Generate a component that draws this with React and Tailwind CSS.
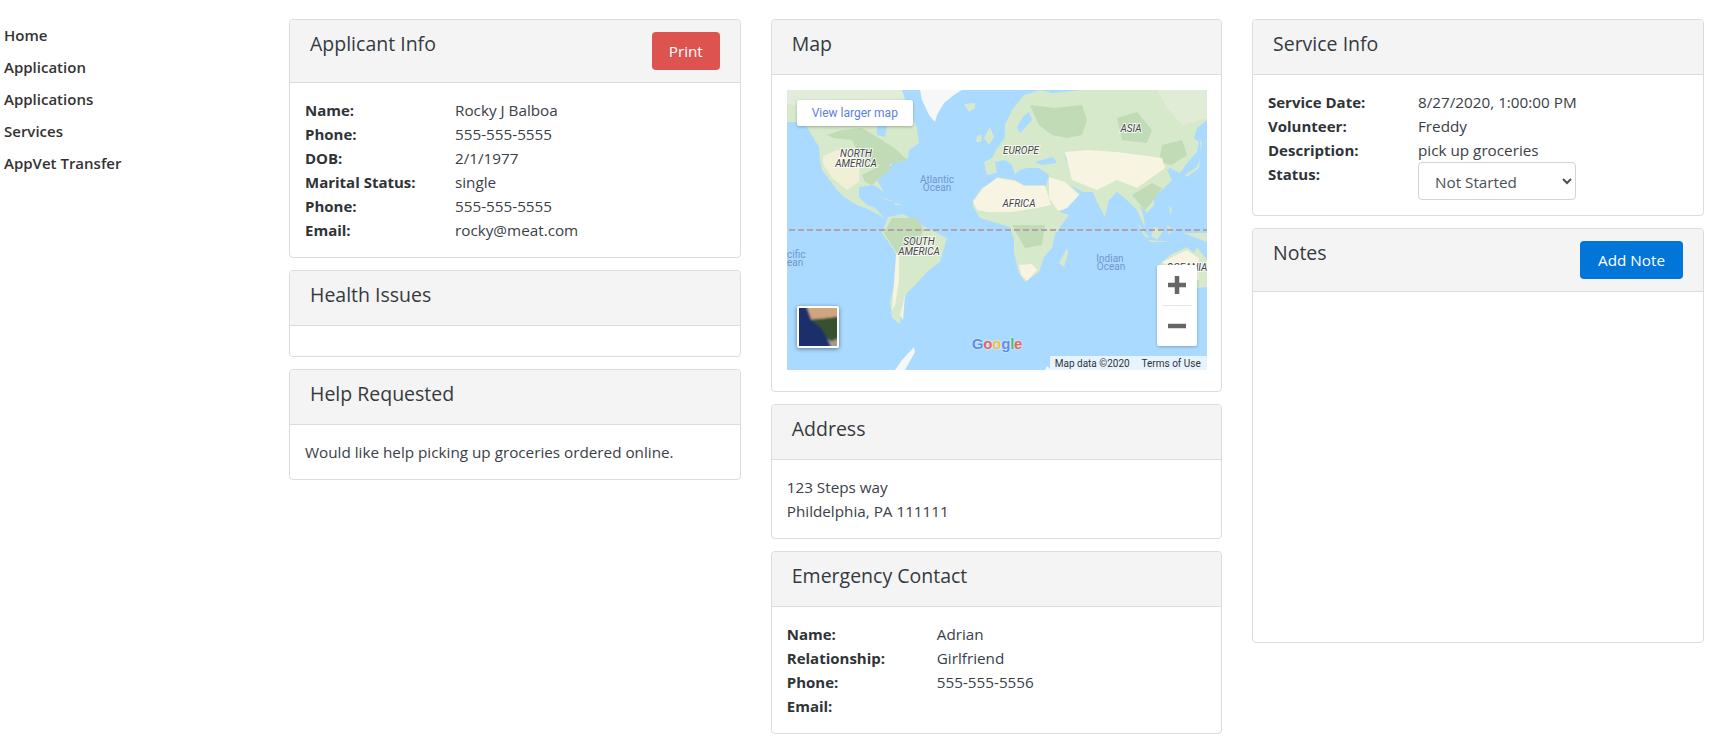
import React from 'react';

const font = { fontFamily: '"Open Sans", "Noto Sans", sans-serif' };

const navItems = ['Home', 'Application', 'Applications', 'Services', 'AppVet Transfer'];

const Card = ({ title, action, bodyClass = 'p-[15px]', children }) => (
  <div className="mb-[12px] rounded-[4px] border border-[#dcdcdc] bg-white">
    <div className="flex items-start justify-between rounded-t-[4px] border-b border-[#dcdcdc] bg-[#f4f4f4] px-5 py-3">
      <h4 className="mb-[6px] text-[19.5px] leading-6 text-[#343a40]">{title}</h4>
      {action}
    </div>
    <div className={bodyClass}>{children}</div>
  </div>
);

const Row = ({ label, children }) => (
  <div className="flex text-[15.25px] leading-6 text-[#3a4047]">
    <div className="w-[150px] shrink-0 text-[15px] font-bold text-[#2f3337]">{label}</div>
    <div>{children}</div>
  </div>
);

const MapLabel = ({ x, y, children }) => (
  <text
    x={x}
    y={y}
    textAnchor="middle"
    fontFamily="Roboto, sans-serif"
    fontSize="10"
    fontStyle="italic"
    fill="#444"
    stroke="#fff"
    strokeWidth="2"
    strokeOpacity="0.8"
    paintOrder="stroke"
  >
    {children}
  </text>
);

const OceanLabel = ({ x, y, anchor = 'middle', children }) => (
  <text x={x} y={y} textAnchor={anchor} fontFamily="Roboto, sans-serif" fontSize="10" fill="#6f96d1">
    {children}
  </text>
);

const WorldMap = () => (
  <div className="relative h-[280px] w-[420px] overflow-hidden bg-[#aadaff]">
    <svg width="420" height="280" viewBox="0 0 420 280" className="block">
      <g className="blur-[0.5px]">
        {/* land base */}
        <g fill="#d6e9ca">
          {/* north america */}
          <path d="M0 0L115 0L122 20L130 38L132 53L122 60L121 68L107 70L102 80L90 90L97 102L87 95L72 97L72 107L80 115L88 118L97 128L83 120L70 115L57 107L50 100L45 93L35 80L33 70L32 57L20 37L10 32L0 32Z" />
          {/* south america */}
          <path d="M95 143L101 127L116 124L138 137L160 148L153 172L140 182L128 195L120 203L115 215L113 234L105 228L103 213L108 190L110 167L107 160Z" />
          {/* eurasia */}
          <path d="M197 72L205 68L210 58L218 48L218 35L225 20L237 5L253 0L420 0L420 30L410 38L407 48L412 52L410 62L400 73L393 83L383 78L380 80L385 90L375 100L367 107L367 115L360 123L353 115L357 128L358 138L350 120L340 110L330 102L322 110L318 127L310 112L306 102L296 102L280 93L278 90L293 104L283 108L277 120L268 123L260 110L258 100L262 85L252 78L240 78L233 80L228 84L225 75L218 70L208 72L210 83L200 85Z" />
          {/* africa */}
          <path d="M186 110L195 98L206 92L210 87L228 90L237 95L258 95L265 115L273 122L282 125L273 137L268 145L265 158L257 167L252 182L238 192L232 183L227 163L227 150L223 137L206 132L193 128L186 117Z" />
          {/* australia */}
          <path d="M372 175L383 165L400 157L407 163L410 157L420 170L420 197L410 198L390 190Z" />
          {/* islands */}
          <path d="M197 48L203 37L207 47L202 55ZM190 46L195 45L194 52L189 52Z" />
          <path d="M177 14L188 13L188 18L182 22Z" />
          <path d="M272 173L280 158L281 163L277 177Z" />
          <path d="M350 133L363 148L358 147ZM367 137L377 140L370 150L364 146ZM396 143L420 152L420 143ZM362 150L385 152L362 152ZM382 115L385 120L383 125ZM380 135L386 140L382 145Z" />
          <path d="M410 77L413 68L412 78L400 87L398 85ZM415 50L414 62L413 52Z" />
          <path d="M93 107L103 110L111 113L100 110ZM108 113L116 115L108 115Z" />
        </g>
        {/* water cut into land */}
        <g fill="#aadaff">
          <path d="M90 36L100 36L98 47L90 45Z" />
          <path d="M236 27L242 22L245 30L233 43L230 37Z" />
          <path d="M248 72L266 67L270 73L255 75Z" />
          <path d="M278 67L285 67L290 78L283 80Z" />
          <path d="M265 3L295 0L253 0Z" />
        </g>
        {/* forest */}
        <g fill="#c0dbb6">
          <path d="M40 45L55 40L75 38L95 50L110 60L120 70L100 75L85 75L75 70L65 50L47 48Z" />
          <path d="M75 85L100 72L105 78L85 95L78 92Z" />
          <path d="M97 143L105 128L130 128L137 140L132 150L110 163Z" />
          <path d="M225 135L258 135L255 155L238 158Z" />
          <path d="M243 15L268 18L295 15L300 30L295 45L280 48L265 45L252 35Z" />
          <path d="M330 28L350 22L365 40L360 53L335 50Z" />
          <path d="M375 55L395 50L400 65L385 75L372 72Z" />
          <path d="M345 105L365 93L375 98L365 112L358 120Z" />
        </g>
        {/* pale north-east */}
        <path d="M370 0L420 0L420 28L395 35L380 18Z" fill="#e0ecd6" />
        <path d="M0 0L115 0L118 14L85 20L50 22L0 14Z" fill="#e2ecdb" />
        {/* dry land */}
        <g fill="#f8f4e2">
          <path d="M186 112L196 98L210 88L228 91L237 96L258 96L264 115L250 118L225 122L200 122L190 120Z" />
          <path d="M262 87L278 92L292 105L280 118L271 121L262 108Z" />
          <path d="M278 62L300 60L330 62L375 68L378 78L350 98L330 90L310 100L285 90Z" />
          <path d="M232 175L245 174L250 180L240 191L234 185Z" />
          <path d="M375 172L400 160L412 168L412 190L392 186Z" />
          <path d="M109 165L112 165L112 190L108 215L105 220Z" />
          <path d="M113 225L118 205L116 230Z" />
        </g>
        <path d="M36 66L50 60L65 62L73 72L72 92L60 100L45 88L36 74Z" fill="#f1efd6" />
        {/* greenland, antarctic scraps */}
        <path d="M133 0L175 0L167 5L157 13L150 25L148 32L142 25L135 10Z" fill="#f6f8f8" />
        <path d="M108 280L115 270L127 257L128 262L118 280ZM258 280L260 276L264 280Z" fill="#f6f8f8" />
      </g>

      {/* equator */}
      <line x1="2" y1="140" x2="420" y2="140" stroke="#b3a2ab" strokeWidth="2" strokeDasharray="6 3" />

      <MapLabel x={69} y={67}>NORTH</MapLabel>
      <MapLabel x={69} y={77}>AMERICA</MapLabel>
      <MapLabel x={234} y={64}>EUROPE</MapLabel>
      <MapLabel x={344} y={42}>ASIA</MapLabel>
      <MapLabel x={232} y={117}>AFRICA</MapLabel>
      <MapLabel x={132} y={155}>SOUTH</MapLabel>
      <MapLabel x={132} y={165}>AMERICA</MapLabel>
      <MapLabel x={400} y={181}>OCEANIA</MapLabel>
      <OceanLabel x={150} y={93}>Atlantic</OceanLabel>
      <OceanLabel x={150} y={101}>Ocean</OceanLabel>
      <OceanLabel x={323} y={172}>Indian</OceanLabel>
      <OceanLabel x={324} y={180}>Ocean</OceanLabel>
      <OceanLabel x={0} y={168} anchor="start">cific</OceanLabel>
      <OceanLabel x={0} y={176} anchor="start">ean</OceanLabel>
    </svg>

    <div className="absolute left-[10px] top-[10px] flex h-[26px] w-[116px] items-center justify-center rounded-[2px] bg-white font-['Roboto'] text-[12px] text-[#5b81e0] shadow-[0_1px_3px_rgba(0,0,0,0.25)]">
      View larger map
    </div>

    <div className="absolute left-[10px] top-[216px] h-[42px] w-[42px] rounded-[2px] border-2 border-white shadow-[0_1px_4px_rgba(0,0,0,0.45)]">
      <svg width="38" height="38" viewBox="0 0 38 38" className="block">
        <rect width="38" height="38" fill="#1d2f6b" />
        <g className="blur-[0.8px]">
          <path d="M7 -2L40 -2L40 9L24 11L12 12Z" fill="#cfa57f" />
          <path d="M12 12L24 11L40 9L40 30L32 33L28 30L22 20Z" fill="#37512f" />
          <path d="M28 30L32 33L40 30L40 40L32 40Z" fill="#a89a88" />
        </g>
      </svg>
    </div>

    <div className="absolute left-[370px] top-[175px] flex h-[81px] w-[40px] flex-col items-center rounded-[2px] bg-white shadow-[0_1px_3px_rgba(0,0,0,0.25)]">
      <svg width="40" height="40" viewBox="0 0 40 40" className="block">
        <path d="M11 20H29M20 11V29" stroke="#666" strokeWidth="4.5" />
      </svg>
      <div className="h-px w-[30px] bg-[#e6e6e6]" />
      <svg width="40" height="40" viewBox="0 0 40 40" className="block">
        <path d="M11 20H29" stroke="#666" strokeWidth="4.5" />
      </svg>
    </div>

    <div className="absolute left-[185px] top-[244px] font-['Liberation_Sans'] text-[15px] font-bold leading-5 tracking-[-0.2px] [text-shadow:0_0_2px_#fff]">
      <span className="text-[#5a8def]">G</span>
      <span className="text-[#e8635a]">o</span>
      <span className="text-[#f3bf3e]">o</span>
      <span className="text-[#5a8def]">g</span>
      <span className="text-[#5cb574]">l</span>
      <span className="text-[#e8635a]">e</span>
    </div>

    <div className="absolute bottom-0 right-0 flex h-[14px] w-[157px] items-center justify-between bg-white/70 pl-[5px] pr-[6px] font-['Roboto'] text-[10px] text-[#333]">
      <span>Map data ©2020</span>
      <span>Terms of Use</span>
    </div>
  </div>
);

export default function App() {
  return (
    <div className="flex min-h-[754px] bg-white" style={font}>
      <nav className="w-[289px] shrink-0 pl-1 pt-[19px]">
        {navItems.map((item) => (
          <div key={item} className="h-8 text-[15px] font-semibold leading-8 text-[#333]">
            {item}
          </div>
        ))}
      </nav>

      <div className="flex gap-[30px] pt-[19px]">
        <div className="w-[451.75px]">
          <Card
            title="Applicant Info"
            action={
              <button className="h-[38px] w-[68px] rounded-[4px] bg-[#dc5350] text-[15.25px] text-white">Print</button>
            }
          >
            <Row label="Name:">Rocky J Balboa</Row>
            <Row label="Phone:">555-555-5555</Row>
            <Row label="DOB:">2/1/1977</Row>
            <Row label="Marital Status:">single</Row>
            <Row label="Phone:">555-555-5555</Row>
            <Row label="Email:">rocky@meat.com</Row>
          </Card>
          <Card title="Health Issues" bodyClass="h-[30px]" />
          <Card title="Help Requested">
            <p className="text-[15.25px] leading-6 text-[#3a4047]">Would like help picking up groceries ordered online.</p>
          </Card>
        </div>

        <div className="w-[451.25px]">
          <Card title="Map" bodyClass="px-[15px] pb-[21px] pt-[15px]">
            <WorldMap />
          </Card>
          <Card title="Address">
            <div className="text-[15.25px] leading-6 text-[#3a4047]">
              <div>123 Steps way</div>
              <div>Phildelphia, PA 111111</div>
            </div>
          </Card>
          <Card title="Emergency Contact">
            <Row label="Name:">Adrian</Row>
            <Row label="Relationship:">Girlfriend</Row>
            <Row label="Phone:">555-555-5556</Row>
            <Row label="Email:"></Row>
          </Card>
        </div>

        <div className="w-[452px]">
          <Card title="Service Info">
            <Row label="Service Date:">8/27/2020, 1:00:00 PM</Row>
            <Row label="Volunteer:">Freddy</Row>
            <Row label="Description:">pick up groceries</Row>
            <Row label="Status:">
              <select className="h-[38px] w-[158px] rounded-[4px] border border-[#ced4da] bg-white pl-3 pr-2 pt-[2px] text-[15.25px] text-[#495057]" defaultValue="Not Started">
                <option>Not Started</option>
                <option>In Progress</option>
                <option>Complete</option>
              </select>
            </Row>
          </Card>
          <Card
            title="Notes"
            action={
              <button className="h-[38px] w-[103px] rounded-[4px] bg-[#0275d8] text-[15.25px] text-white">Add Note</button>
            }
            bodyClass="h-[350px]"
          />
        </div>
      </div>
    </div>
  );
}
